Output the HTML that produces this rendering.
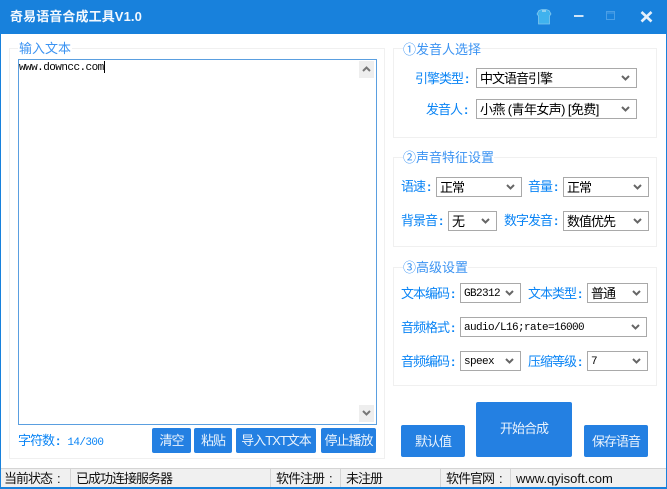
<!DOCTYPE html>
<html><head><meta charset="utf-8">
<style>
*{box-sizing:border-box}
html,body{margin:0;padding:0;width:667px;height:489px;overflow:hidden;background:#fff}
body{font-family:"Liberation Sans","WenQuanYi Zen Hei","Noto Sans CJK SC",sans-serif;font-size:13px;position:relative}
.a{position:absolute;white-space:nowrap}
.g{position:absolute;border:1px solid #f0f0f0}
.lg{position:absolute;color:#3b93f2;font-size:13px;line-height:14px;background:#fff;white-space:nowrap}
.l{position:absolute;color:#0a84f5;font-size:13px;letter-spacing:-1px;line-height:16px;white-space:nowrap;margin-top:1px}
.l i,.st i{font-style:normal;margin-left:2px;font-weight:bold;letter-spacing:0}
.st i{margin-left:5px;font-weight:normal}
.s{position:absolute;height:20px;border:1px solid #a9a9a9;background:#fff;color:#000;font-size:13px;letter-spacing:-1px;line-height:19px;padding-left:3px;white-space:nowrap;overflow:hidden}
.s svg{position:absolute;right:5px;top:5px}
.m{font-family:"Liberation Mono",monospace;font-size:11px;letter-spacing:-.6px;line-height:21px}
.b{position:absolute;background:#2480e2;color:#eaf3fd;text-align:center;border-radius:2px;white-space:nowrap;font-size:13px;letter-spacing:-1px}
.st{position:absolute;top:470px;font-size:13px;letter-spacing:-1px;line-height:17px;color:#111;white-space:nowrap}
.sp{position:absolute;top:469px;width:1px;height:18px;background:#d4d4d4}
</style></head><body>
<div class="a" style="left:0;top:0;width:667px;height:34px;background:#1881dc"></div>
<div class="a" style="left:10px;top:9px;color:#f2f8fe;font-size:13px;font-weight:bold;line-height:16px;letter-spacing:.1px">奇易语音合成工具V1.0</div>
<svg class="a" style="left:534px;top:8px" width="20" height="18" viewBox="0 0 20 18"><path d="M5 2.5 L8 1.5 H12 L15 2.5 L17 6 L15.5 8 V16 H4.5 V8 L3 6Z" fill="#3fb2ee" stroke="#7fc6ee" stroke-width=".8"/><path d="M8 2 H12 V4 H8Z" fill="#8fd0f0"/></svg>
<svg class="a" style="left:570px;top:8px" width="90" height="18" viewBox="0 0 90 18"><path d="M4 8 H13.5" stroke="#cfe4f7" stroke-width="2"/><path d="M36.5 3.5 H44.5 V11.5 H36.5Z M36.5 5H44.5" fill="none" stroke="#4b9fe6" stroke-width="1"/><path d="M71.5 4 L81.5 13.5 M81.5 4 L71.5 13.5" stroke="#e4f0fb" stroke-width="2.6"/></svg>
<div class="a" style="left:0;top:34px;width:1px;height:455px;background:#1881dc"></div>
<div class="a" style="right:0;top:34px;width:1px;height:455px;background:#1881dc"></div>
<div class="a" style="left:0;top:487px;width:667px;height:2px;background:#1881dc"></div>

<div class="g" style="left:9px;top:48px;width:376px;height:411px"></div>
<div class="lg" style="left:18px;top:42px;padding:0 1px 0 1px">输入文本</div>
<div class="a" style="left:18px;top:59px;width:359px;height:366px;border:1px solid #5a9fe0;background:#fff"></div>
<div class="a" style="left:19px;top:62px;font-family:'Liberation Mono',monospace;font-size:11px;line-height:13px;color:#000;letter-spacing:-.55px">www.downcc.com</div>
<div class="a" style="left:104px;top:61px;width:1px;height:12px;background:#000"></div>
<div class="a" style="left:359px;top:61px;width:15px;height:17px;background:#eee"></div>
<svg class="a" style="left:361px;top:65px" width="11" height="8" viewBox="0 0 11 8"><path d="M2 6 L5.5 2.5 L9 6" fill="none" stroke="#777" stroke-width="2"/></svg>
<div class="a" style="left:359px;top:405px;width:15px;height:17px;background:#eee"></div>
<svg class="a" style="left:361px;top:409px" width="11" height="8" viewBox="0 0 11 8"><path d="M2 2 L5.5 5.5 L9 2" fill="none" stroke="#777" stroke-width="2"/></svg>
<div class="l" style="left:18px;top:432px">字符数<i style="margin-right:7px">:</i><span class="m" style="line-height:16px">14/300</span></div>
<div class="b" style="left:152px;top:428px;width:39px;height:25px;line-height:25px">清空</div>
<div class="b" style="left:194px;top:428px;width:38px;height:25px;line-height:25px">粘贴</div>
<div class="b" style="left:236px;top:428px;width:80px;height:25px;line-height:25px">导入TXT文本</div>
<div class="b" style="left:321px;top:428px;width:55px;height:25px;line-height:25px">停止播放</div>

<div class="g" style="left:393px;top:48px;width:264px;height:90px"></div>
<div class="lg" style="left:403px;top:43px">①发音人选择</div>
<div class="l" style="left:415px;top:70px">引擎类型<i>:</i></div>
<div class="s" style="left:476px;top:68px;width:161px">中文语音引擎<svg width="11" height="8" viewBox="0 0 11 8"><path d="M2 2 L5.5 5.5 L9 2" fill="none" stroke="#666" stroke-width="2"/></svg></div>
<div class="l" style="left:426px;top:101px">发音人<i>:</i></div>
<div class="s" style="left:476px;top:99px;width:161px;letter-spacing:-.6px">小燕 (青年女声) [免费]<svg width="11" height="8" viewBox="0 0 11 8"><path d="M2 2 L5.5 5.5 L9 2" fill="none" stroke="#666" stroke-width="2"/></svg></div>

<div class="g" style="left:393px;top:157px;width:264px;height:90px"></div>
<div class="lg" style="left:403px;top:151px">②声音特征设置</div>
<div class="l" style="left:401px;top:178px">语速<i>:</i></div>
<div class="s" style="left:436px;top:177px;width:86px">正常<svg width="11" height="8" viewBox="0 0 11 8"><path d="M2 2 L5.5 5.5 L9 2" fill="none" stroke="#666" stroke-width="2"/></svg></div>
<div class="l" style="left:528px;top:178px">音量<i>:</i></div>
<div class="s" style="left:563px;top:177px;width:86px">正常<svg width="11" height="8" viewBox="0 0 11 8"><path d="M2 2 L5.5 5.5 L9 2" fill="none" stroke="#666" stroke-width="2"/></svg></div>
<div class="l" style="left:401px;top:212px">背景音<i>:</i></div>
<div class="s" style="left:448px;top:211px;width:49px">无<svg width="11" height="8" viewBox="0 0 11 8"><path d="M2 2 L5.5 5.5 L9 2" fill="none" stroke="#666" stroke-width="2"/></svg></div>
<div class="l" style="left:504px;top:212px">数字发音<i>:</i></div>
<div class="s" style="left:563px;top:211px;width:86px">数值优先<svg width="11" height="8" viewBox="0 0 11 8"><path d="M2 2 L5.5 5.5 L9 2" fill="none" stroke="#666" stroke-width="2"/></svg></div>

<div class="g" style="left:393px;top:267px;width:264px;height:119px"></div>
<div class="lg" style="left:403px;top:261px">③高级设置</div>
<div class="l" style="left:401px;top:285px">文本编码<i>:</i></div>
<div class="s m" style="left:460px;top:283px;width:61px">GB2312<svg width="11" height="8" viewBox="0 0 11 8"><path d="M2 2 L5.5 5.5 L9 2" fill="none" stroke="#666" stroke-width="2"/></svg></div>
<div class="l" style="left:528px;top:285px">文本类型<i>:</i></div>
<div class="s" style="left:587px;top:283px;width:61px">普通<svg width="11" height="8" viewBox="0 0 11 8"><path d="M2 2 L5.5 5.5 L9 2" fill="none" stroke="#666" stroke-width="2"/></svg></div>
<div class="l" style="left:401px;top:319px">音频格式<i>:</i></div>
<div class="s m" style="left:460px;top:317px;width:187px">audio/L16;rate=16000<svg width="11" height="8" viewBox="0 0 11 8"><path d="M2 2 L5.5 5.5 L9 2" fill="none" stroke="#666" stroke-width="2"/></svg></div>
<div class="l" style="left:401px;top:353px">音频编码<i>:</i></div>
<div class="s m" style="left:460px;top:351px;width:61px">speex<svg width="11" height="8" viewBox="0 0 11 8"><path d="M2 2 L5.5 5.5 L9 2" fill="none" stroke="#666" stroke-width="2"/></svg></div>
<div class="l" style="left:528px;top:353px">压缩等级<i>:</i></div>
<div class="s m" style="left:587px;top:351px;width:61px">7<svg width="11" height="8" viewBox="0 0 11 8"><path d="M2 2 L5.5 5.5 L9 2" fill="none" stroke="#666" stroke-width="2"/></svg></div>

<div class="b" style="left:401px;top:425px;width:64px;height:32px;line-height:33px">默认值</div>
<div class="b" style="left:476px;top:402px;width:96px;height:55px;line-height:54px">开始合成</div>
<div class="b" style="left:584px;top:425px;width:64px;height:32px;line-height:33px">保存语音</div>

<div class="a" style="left:1px;top:468px;width:665px;height:19px;background:#f0f0f0;border-top:1px solid #d4d4d4"></div>
<div class="sp" style="left:70px"></div><div class="sp" style="left:270px"></div><div class="sp" style="left:340px"></div><div class="sp" style="left:440px"></div><div class="sp" style="left:510px"></div>
<div class="st" style="left:4px">当前状态<i>:</i></div>
<div class="st" style="left:76px">已成功连接服务器</div>
<div class="st" style="left:276px">软件注册<i>:</i></div>
<div class="st" style="left:346px">未注册</div>
<div class="st" style="left:446px">软件官网<i>:</i></div>
<div class="st" style="left:516px;letter-spacing:0">www.qyisoft.com</div>
</body></html>
